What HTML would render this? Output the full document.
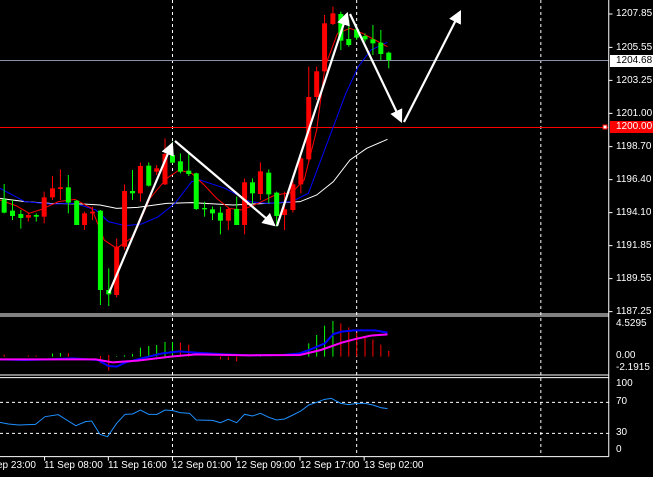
<!DOCTYPE html>
<html><head><meta charset="utf-8"><style>
html,body{margin:0;padding:0;background:#000;}
#w{position:relative;width:653px;height:477px;overflow:hidden;background:#000;font-family:"Liberation Sans",sans-serif;font-size:10px;color:#fff;}
svg{position:absolute;left:0;top:0;}
.l{position:absolute;left:616px;line-height:10px;white-space:nowrap;}
.t{position:absolute;top:461px;line-height:10px;white-space:nowrap;}
</style></head><body><div id="w">
<svg width="653" height="477" viewBox="0 0 1567.2 1431" preserveAspectRatio="none">
<g fill="none" vector-effect="non-scaling-stroke">
<path d="M414 0V1370M856 0V1370M1298 0V1370" stroke="#fff" stroke-dasharray="3 3" vector-effect="non-scaling-stroke"/>
<path d="M0 181.5H1461" stroke="#8a94a8" vector-effect="non-scaling-stroke"/>
<path d="M0 382.5H1461" stroke="#ff0000" vector-effect="non-scaling-stroke"/>
<path d="M0 942H1461M0 948H1461M0 1125H1461M0 1133H1461M0 1370H1461M1461 0V1370" stroke="#fff" vector-effect="non-scaling-stroke"/>
<path d="M0 1207H1461M0 1300H1461" stroke="#fff" stroke-dasharray="3 3" vector-effect="non-scaling-stroke"/>
<path d="M1461 42H1470M1461 142H1470M1461 241H1470M1461 340H1470M1461 440H1470M1461 539H1470M1461 638H1470M1461 737H1470M1461 836H1470M1461 935H1470M107 1370V1382M260 1370V1382M414 1370V1382M567 1370V1382M720 1370V1382M874 1370V1382" stroke="#fff" vector-effect="non-scaling-stroke"/>
<polyline points="0,595 60,605 120,610 200,612 240,615 280,625 330,622 400,610 460,608 560,615 640,610 720,605 760,585 800,545 840,480 880,445 930,418" stroke="#fff" vector-effect="non-scaling-stroke"/>
<polyline points="0,565 60,605 120,612 180,610 230,630 260,665 300,677 340,672 380,650 420,610 460,545 480,540 540,565 600,605 640,610 700,605 740,580 770,480 800,380 830,280 860,200 890,150 930,127" stroke="#0000ff" vector-effect="non-scaling-stroke"/>
<polyline points="0,600 40,618 70,640 100,628 140,605 180,598 220,625 250,720 280,745 320,710 360,595 400,535 430,510 460,520 490,555 520,595 550,625 580,630 620,610 660,585 700,578 730,540 760,390 780,200 810,100 840,85 870,100 900,120 930,140" stroke="#ff0000" vector-effect="non-scaling-stroke"/>
<path stroke="#00ff00" vector-effect="non-scaling-stroke" d="M10 552V640M30 600V660M50 630V686M87 640V665M164 525V640M184 600V675M241 630V915M261 805V918M318 510V600M357 487V560M414 425V490M433 460V520M453 460V528M471 518V630M491 605V650M510 620V660M529 620V703M568 590V675M606 535V610M645 508V610M664 575V680M818 35V150M837 60V140M856 80V120M876 100V125M895 75V165M914 90V180M933 155V205"/>
<path stroke="#ff0000" vector-effect="non-scaling-stroke" d="M68 640V665M106 575V670M126 528V600M145 508V600M203 635V690M222 620V660M280 715V892M299 553V750M337 488V605M376 495V525M396 415V555M548 620V690M587 535V703M625 487V600M683 575V690M703 540V638M722 470V580M741 200V485M760 200V300M779 45V215M799 20V75"/>
</g>
<g fill="#00ff00">
<rect x="4" y="598" width="12" height="40"/><rect x="24" y="632" width="12" height="16"/><rect x="44" y="642" width="12" height="12"/><rect x="81" y="645" width="12" height="5"/><rect x="158" y="562" width="12" height="46"/><rect x="178" y="602" width="12" height="73"/><rect x="235" y="632" width="12" height="238"/><rect x="255" y="870" width="12" height="13"/><rect x="312" y="573" width="12" height="7"/><rect x="351" y="497" width="12" height="60"/><rect x="408" y="465" width="12" height="23"/><rect x="427" y="484" width="12" height="31"/><rect x="447" y="512" width="12" height="10"/><rect x="465" y="520" width="12" height="107"/><rect x="485" y="624" width="12" height="4"/><rect x="504" y="628" width="12" height="12"/><rect x="523" y="638" width="12" height="24"/><rect x="562" y="627" width="12" height="48"/><rect x="600" y="547" width="12" height="33"/><rect x="639" y="518" width="12" height="65"/><rect x="658" y="578" width="12" height="70"/><rect x="812" y="42" width="12" height="80"/><rect x="831" y="117" width="12" height="18"/><rect x="850" y="88" width="12" height="25"/><rect x="870" y="108" width="12" height="10"/><rect x="889" y="118" width="12" height="12"/><rect x="908" y="128" width="12" height="34"/><rect x="927" y="158" width="12" height="22"/>
</g>
<g fill="#ff0000">
<rect x="62" y="645" width="12" height="8"/><rect x="100" y="592" width="12" height="58"/><rect x="120" y="565" width="12" height="27"/><rect x="139" y="562" width="12" height="5"/><rect x="197" y="640" width="12" height="35"/><rect x="216" y="635" width="12" height="5"/><rect x="274" y="740" width="12" height="145"/><rect x="293" y="573" width="12" height="167"/><rect x="331" y="498" width="12" height="82"/><rect x="370" y="505" width="12" height="10"/><rect x="390" y="462" width="12" height="91"/><rect x="542" y="627" width="12" height="35"/><rect x="581" y="547" width="12" height="128"/><rect x="619" y="514" width="12" height="68"/><rect x="677" y="628" width="12" height="17"/><rect x="697" y="553" width="12" height="77"/><rect x="716" y="475" width="12" height="78"/><rect x="735" y="291" width="12" height="187"/><rect x="754" y="214" width="12" height="77"/><rect x="773" y="70" width="12" height="144"/><rect x="793" y="40" width="12" height="32"/>
</g>
<g transform="translate(0,930)" fill="none">
<path stroke="#00ff00" vector-effect="non-scaling-stroke" d="M126 140V131M145 140V129M280 140V138M299 140V136M318 140V132M337 140V113M357 140V108M376 140V105M396 140V96M414 140V96M625 140V137M741 140V100M760 140V75M779 140V47M799 140V33"/>
<path stroke="#ff0000" vector-effect="non-scaling-stroke" d="M10 140V134M68 140V137M87 140V137M164 140V129M241 138V160M261 135V182M433 140V98M453 140V104M529 140V148M548 140V150M568 140V154M818 140V40M837 140V52M856 140V68M876 140V78M895 140V88M914 140V104M933 140V123"/>
<polyline stroke="#0000ff" stroke-width="2" vector-effect="non-scaling-stroke" points="0,148 60,150 120,148 175,145 235,150 260,168 280,170 300,158 340,145 390,130 430,124 470,128 540,133 600,136 680,135 720,130 750,116 780,100 800,72 820,65 850,61 900,61 930,68"/>
<polyline stroke="#ff00ff" stroke-width="2" vector-effect="non-scaling-stroke" points="0,148 230,148 270,157 330,152 410,140 470,133 600,136 720,135 770,120 820,98 850,88 890,77 930,73"/>
<polyline stroke="#1e90ff" vector-effect="non-scaling-stroke" points="0,337 20,342 45,345 85,343 108,320 140,314 160,330 182,347 205,335 220,333 240,373 258,380 280,340 300,313 318,312 337,300 357,313 377,313 396,300 415,302 432,308 455,310 471,330 510,331 529,338 548,328 568,338 587,313 606,318 625,310 645,322 664,330 683,327 703,315 722,303 741,285 760,277 779,268 795,265 818,280 837,284 856,280 876,280 895,285 914,293 930,296"/>
</g>
</svg>
<svg width="653" height="477">
<defs><marker id="a" markerWidth="6" markerHeight="6" refX="5" refY="3" orient="auto" markerUnits="strokeWidth"><path d="M0 0L6 3L0 6Z" fill="#fff"/></marker></defs>
<g stroke="#fff" stroke-width="2.2" fill="none" marker-end="url(#a)">
<line x1="109" y1="293" x2="172" y2="144"/>
<line x1="175" y1="141" x2="274" y2="225"/>
<line x1="277" y1="226" x2="347" y2="14"/>
<line x1="350" y1="14" x2="401" y2="121"/>
<line x1="404" y1="122" x2="460" y2="12"/>
</g>
<rect x="603" y="125" width="4" height="4" fill="#fff" stroke="#ff0000"/>
<rect x="610" y="55" width="43" height="12" fill="#fff"/>
<rect x="610" y="121" width="43" height="12" fill="#ff0000"/>
</svg>
<div class="l" style="top:9px">1207.85</div>
<div class="l" style="top:43px">1205.55</div>
<div class="l" style="top:56px;color:#000">1204.68</div>
<div class="l" style="top:76px">1203.25</div>
<div class="l" style="top:109px">1201.00</div>
<div class="l" style="top:122px">1200.00</div>
<div class="l" style="top:142px">1198.70</div>
<div class="l" style="top:175px">1196.40</div>
<div class="l" style="top:208px">1194.10</div>
<div class="l" style="top:241px">1191.85</div>
<div class="l" style="top:274px">1189.55</div>
<div class="l" style="top:307px">1187.25</div>
<div class="l" style="top:319px">4.5295</div>
<div class="l" style="top:351px">0.00</div>
<div class="l" style="top:363px">-2.1915</div>
<div class="l" style="top:379px">100</div>
<div class="l" style="top:397px">70</div>
<div class="l" style="top:428px">30</div>
<div class="l" style="top:445px">0</div>
<div class="t" style="left:-3px">ep 23:00</div>
<div class="t" style="left:44px">11 Sep 08:00</div>
<div class="t" style="left:108px">11 Sep 16:00</div>
<div class="t" style="left:172px">12 Sep 01:00</div>
<div class="t" style="left:236px">12 Sep 09:00</div>
<div class="t" style="left:300px">12 Sep 17:00</div>
<div class="t" style="left:364px">13 Sep 02:00</div>
</div></body></html>
